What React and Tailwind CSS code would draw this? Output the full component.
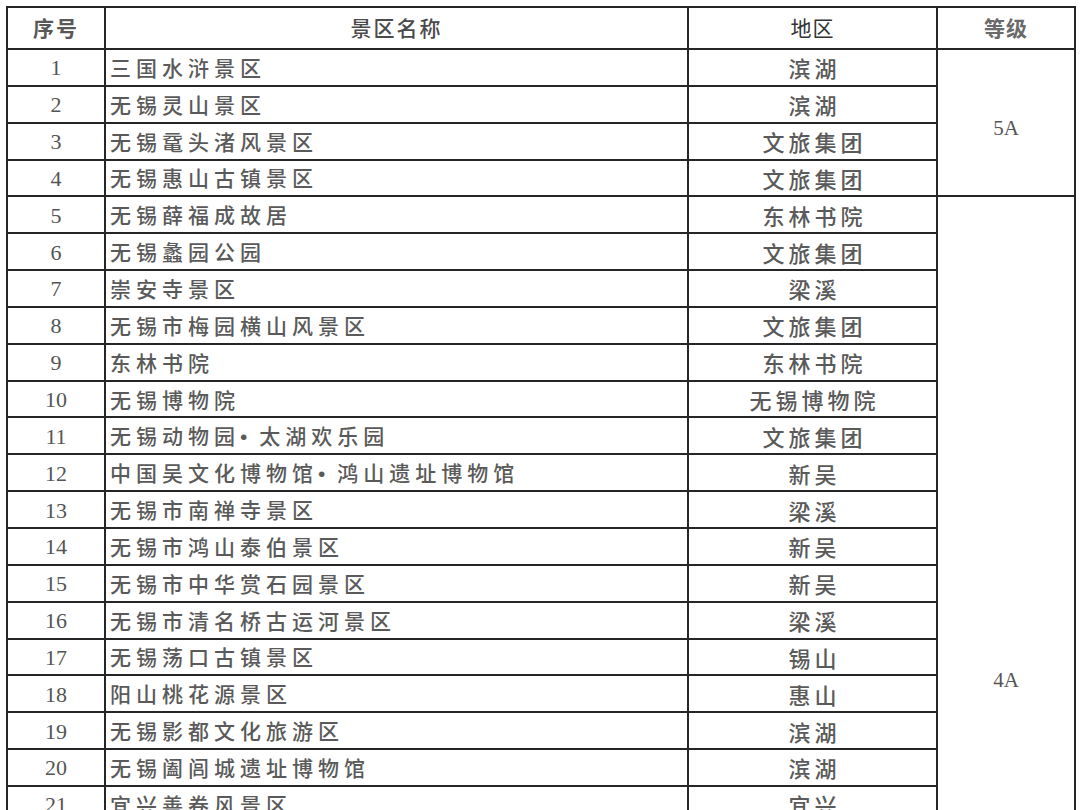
import React from "react";

// 无锡 A级景区 table, rendered as a plain bordered grid
const rows = [
  ["1", "三国水浒景区", "滨湖"],
  ["2", "无锡灵山景区", "滨湖"],
  ["3", "无锡鼋头渚风景区", "文旅集团"],
  ["4", "无锡惠山古镇景区", "文旅集团"],
  ["5", "无锡薛福成故居", "东林书院"],
  ["6", "无锡蠡园公园", "文旅集团"],
  ["7", "崇安寺景区", "梁溪"],
  ["8", "无锡市梅园横山风景区", "文旅集团"],
  ["9", "东林书院", "东林书院"],
  ["10", "无锡博物院", "无锡博物院"],
  ["11", "无锡动物园•太湖欢乐园", "文旅集团"],
  ["12", "中国吴文化博物馆•鸿山遗址博物馆", "新吴"],
  ["13", "无锡市南禅寺景区", "梁溪"],
  ["14", "无锡市鸿山泰伯景区", "新吴"],
  ["15", "无锡市中华赏石园景区", "新吴"],
  ["16", "无锡市清名桥古运河景区", "梁溪"],
  ["17", "无锡荡口古镇景区", "锡山"],
  ["18", "阳山桃花源景区", "惠山"],
  ["19", "无锡影都文化旅游区", "滨湖"],
  ["20", "无锡阖闾城遗址博物馆", "滨湖"],
  ["21", "宜兴善卷风景区", "宜兴"],
];

// rows past 21 fall below the fold; they only keep the 4A cell tall
const extra = Array.from({ length: 9 }, (_, i) => [String(22 + i), "", ""]);

const cjk = "font-['Noto_Sans_CJK_SC','Noto_Sans',sans-serif]";
const serif = "font-['Liberation_Serif',serif]";
const cell = "border-2 border-[#262626] p-0";

// the bullet in the names is a narrow western dot, not a full-width one
function Name({ text }) {
  const parts = text.split("•");
  return parts.map((p, i) => (
    <React.Fragment key={i}>
      {i > 0 && <span className="pr-[12px] font-['Liberation_Sans',sans-serif] tracking-normal">•</span>}
      {p}
    </React.Fragment>
  ));
}

export default function App() {
  const all = [...rows, ...extra];
  return (
    <div className="h-[810px] w-[1080px] overflow-hidden bg-white pl-[6px] pt-[6px]">
      <table className="w-[1068px] table-fixed border-collapse">
        <colgroup>
          <col className="w-[98px]" />
          <col className="w-[583px]" />
          <col className="w-[249px]" />
          <col className="w-[138px]" />
        </colgroup>
        <thead>
          <tr className="h-[42px]">
            <th className={`${cell} ${cjk} text-[21px] font-bold tracking-[2px] text-[#585858]`}>序号</th>
            <th className={`${cell} ${cjk} text-[21px] font-medium tracking-[2px] text-[#4a4a4a]`}>景区名称</th>
            <th className={`${cell} ${cjk} text-[21px] font-normal tracking-[1px] text-[#333]`}>地区</th>
            <th className={`${cell} ${cjk} text-[21px] font-bold tracking-[1px] text-[#6a6a6a]`}>等级</th>
          </tr>
        </thead>
        <tbody>
          {all.map(([no, name, area], i) => (
            <tr key={no} className="h-[36.85px]">
              <td className={`${cell} ${serif} pt-[2px] text-center text-[22px] leading-none text-[#555]`}>{no}</td>
              <td className={`${cell} ${cjk} pl-[4px] text-[21px] font-medium leading-none tracking-[5px] whitespace-nowrap text-[#5a5a5a]`}>
                <Name text={name} />
              </td>
              <td className={`${cell} ${cjk} pl-[4px] text-center text-[22px] font-medium leading-none tracking-[4px] whitespace-nowrap text-[#5a5a5a]`}>
                {area}
              </td>
              {i === 0 && (
                <td rowSpan={4} className={`${cell} ${serif} pt-[12px] text-center text-[21px] text-[#555]`}>
                  5A
                </td>
              )}
              {i === 4 && (
                <td rowSpan={26} className={`${cell} ${serif} pt-[10px] text-center text-[21px] text-[#555]`}>
                  4A
                </td>
              )}
            </tr>
          ))}
        </tbody>
      </table>
    </div>
  );
}
